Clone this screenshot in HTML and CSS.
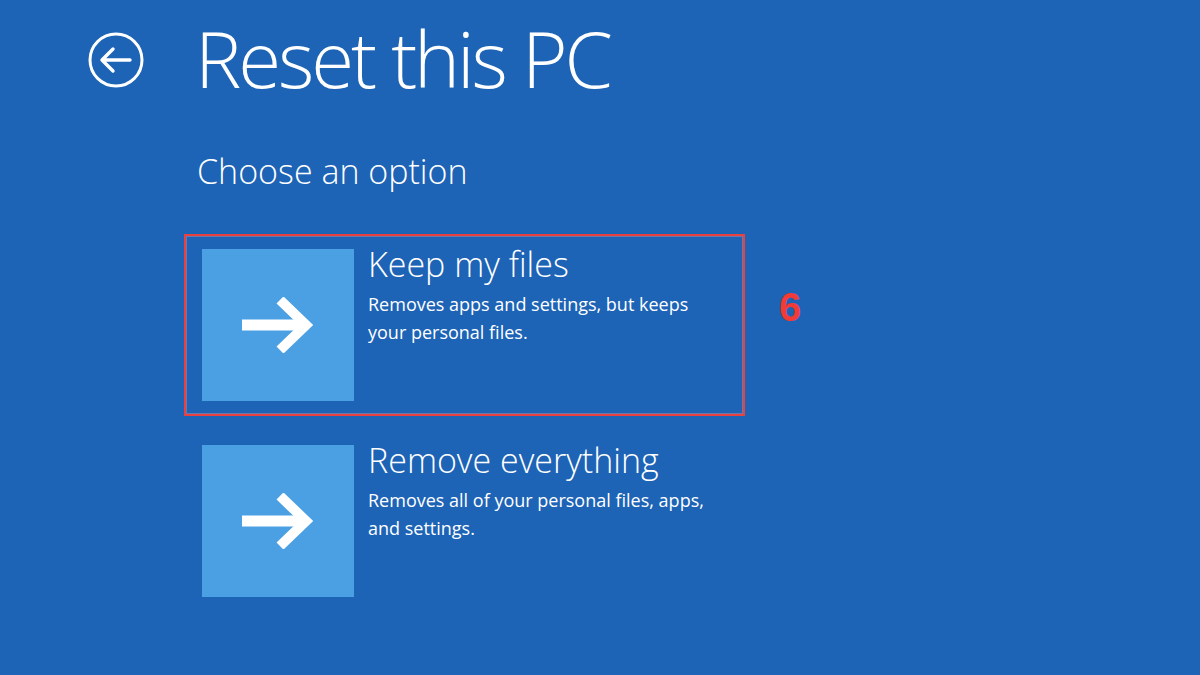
FILE: index.html
```html
<!DOCTYPE html>
<html lang="en">
	<head>
		<meta charset="UTF-8" />
		<meta name="viewport" content="width=device-width, initial-scale=1.0" />
		<title>Reset this PC</title>
		<link rel="stylesheet" href="styles.css">
	</head>
	<body>
		<div class="header">
			<a class="back" href="#" aria-label="Back">
				<svg width="56" height="56" viewBox="0 0 56 56">
					<circle cx="28" cy="28" r="26" fill="none" stroke="#fff" stroke-width="3" />
					<path d="M14 28 H42 M25 17 L14 28 L25 39" fill="none" stroke="#fff" stroke-width="3.4" stroke-linecap="round" stroke-linejoin="round" />
				</svg>
			</a>
			<h1>Reset this PC</h1>
		</div>

		<div class="main">
			<h2>Choose an option</h2>

			<div class="options">
				<div class="option option--marked">
					<div class="tile">
						<svg width="72" height="56" viewBox="0 0 72 56">
							<path d="M0 28 H62" fill="none" stroke="#fff" stroke-width="11" />
							<path d="M38 3 L64 28 L38 53" fill="none" stroke="#fff" stroke-width="10" stroke-linejoin="miter" />
						</svg>
					</div>
					<div class="option__text">
						<h3>Keep my files</h3>
						<p>Removes apps and settings, but keeps your personal files.</p>
					</div>
					<span class="step">6</span>
				</div>

				<div class="option">
					<div class="tile">
						<svg width="72" height="56" viewBox="0 0 72 56">
							<path d="M0 28 H62" fill="none" stroke="#fff" stroke-width="11" />
							<path d="M38 3 L64 28 L38 53" fill="none" stroke="#fff" stroke-width="10" stroke-linejoin="miter" />
						</svg>
					</div>
					<div class="option__text">
						<h3>Remove everything</h3>
						<p>Removes all of your personal files, apps, and settings.</p>
					</div>
				</div>
			</div>
		</div>
	</body>
</html>
```

FILE: styles.css
```css
* {
	box-sizing: border-box;
	margin: 0;
	padding: 0;
}

body {
	font-family: "Open Sans", sans-serif;
	background-color: #1d63b6;
	color: white;
	width: 1200px;
	height: 675px;
	overflow: hidden;
}

.header {
	display: flex;
	align-items: center;
	padding: 10px 0 0 88px;
}

.back {
	display: flex;
	width: 56px;
	height: 56px;
	margin-top: 4px;
}

h1 {
	font-size: 78px;
	font-weight: 300;
	line-height: 96px;
	letter-spacing: -3.1px;
	margin-left: 51px;
}

.main {
	padding-left: 197px;
}

h2 {
	font-size: 34px;
	font-weight: 300;
	line-height: 48px;
	margin-top: 41px;
}

.options {
	display: flex;
	flex-direction: column;
	gap: 14px;
	margin-top: 39px;
	margin-left: -13px;
}

.option {
	position: relative;
	display: flex;
	width: 561px;
	height: 182px;
	padding: 13px 16px;
	border: 2px solid transparent;
}

.option--marked {
	border-color: #e8413f;
	box-shadow: inset 0 0 0 1px rgba(255, 160, 160, 0.35);
}

.tile {
	flex: none;
	display: flex;
	align-items: center;
	justify-content: center;
	width: 152px;
	height: 152px;
	background-color: #4aa0e2;
}

.option__text {
	margin-left: 14px;
}

h3 {
	font-size: 34px;
	font-weight: 300;
	line-height: 40px;
	margin-top: -5px;
}

.option__text p {
	font-size: 18px;
	line-height: 28px;
	margin-top: 6px;
	width: 345px;
}

.step {
	position: absolute;
	left: 593px;
	top: 47px;
	color: #f23a36;
	font-family: "Liberation Sans", sans-serif;
	font-weight: bold;
	font-size: 40px;
	line-height: 48px;
}
```
